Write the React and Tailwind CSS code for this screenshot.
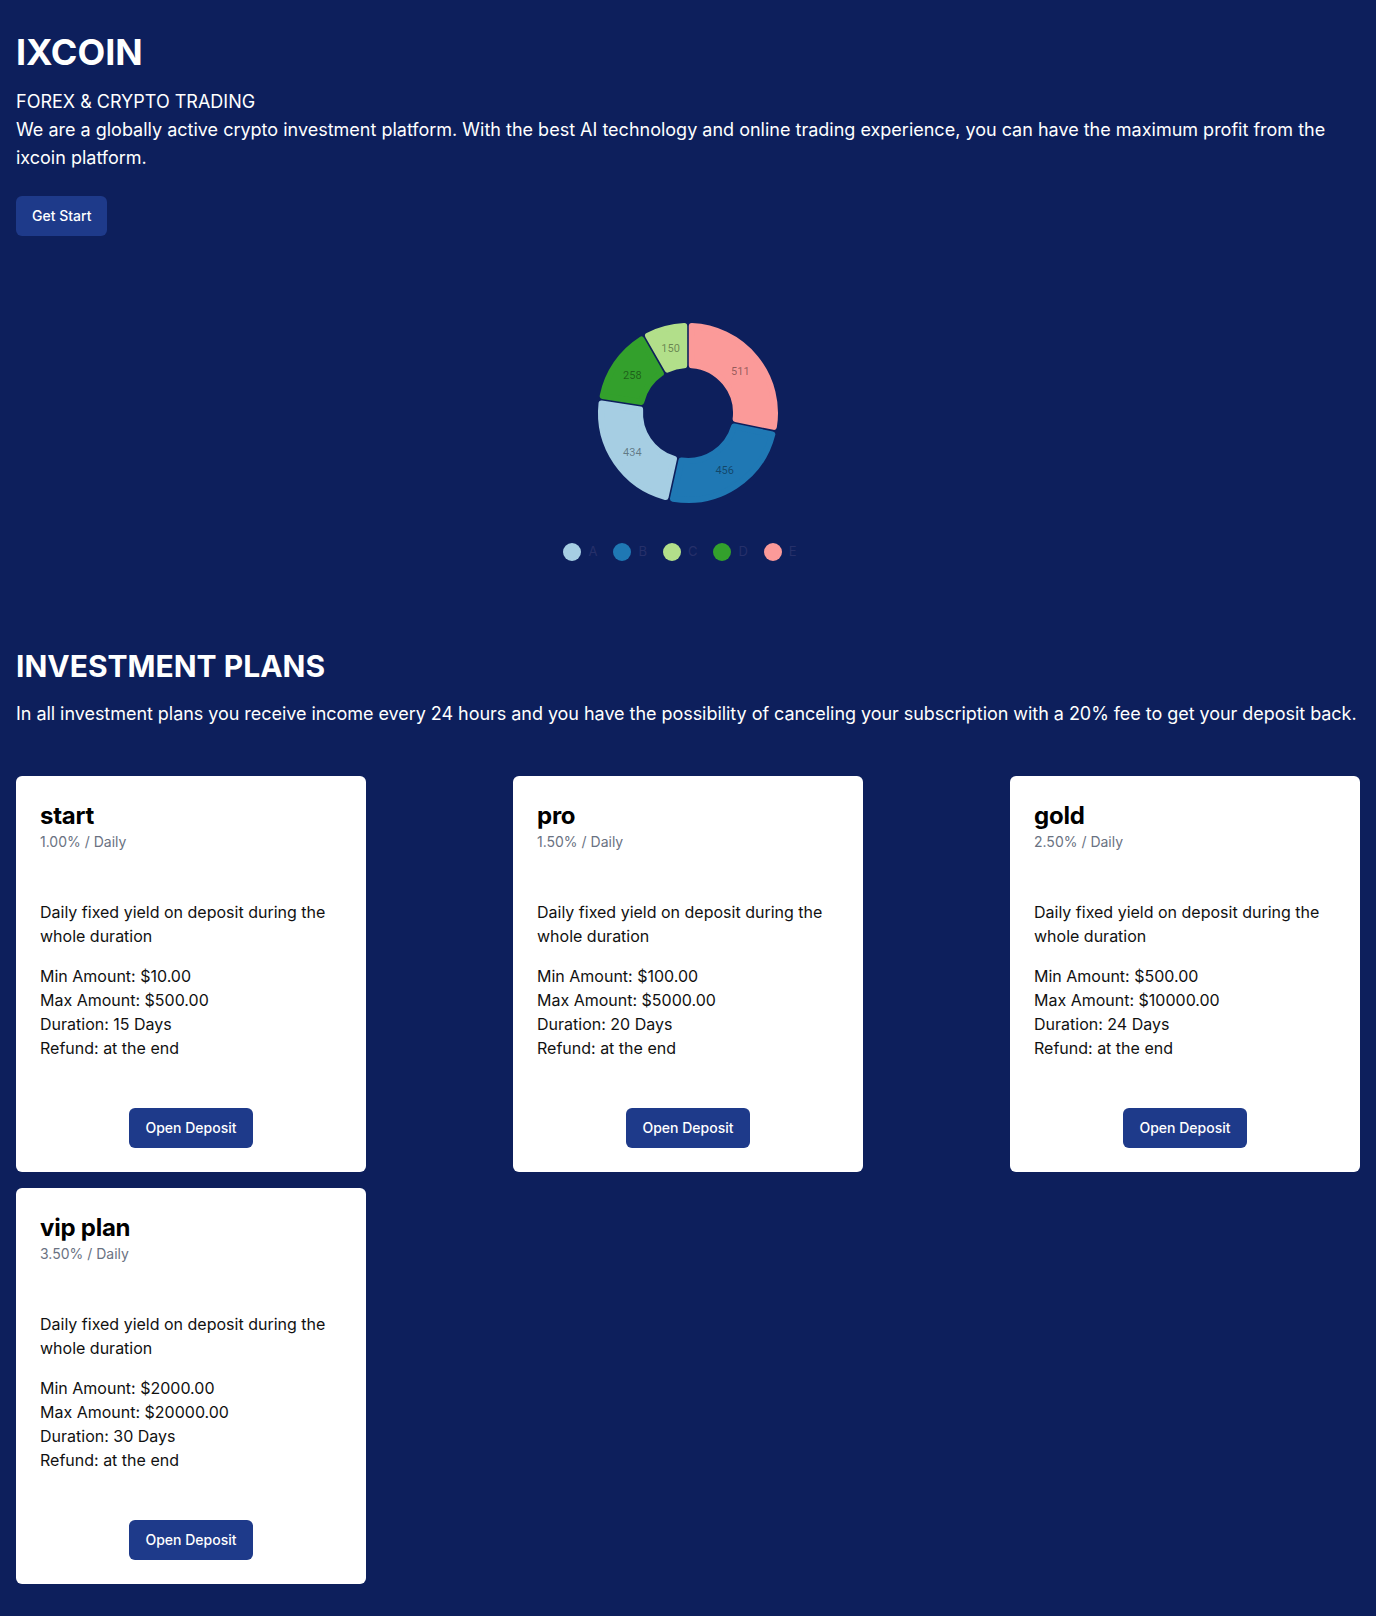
const plans = [
  { name: 'start', rate: '1.00%', min: '$10.00', max: '$500.00', days: 15 },
  { name: 'pro', rate: '1.50%', min: '$100.00', max: '$5000.00', days: 20 },
  { name: 'gold', rate: '2.50%', min: '$500.00', max: '$10000.00', days: 24 },
  { name: 'vip plan', rate: '3.50%', min: '$2000.00', max: '$20000.00', days: 30 }
]

// clockwise from 12 o'clock, biggest first
const slices = [
  { label: 'E', value: 511, color: '#fb9a99' },
  { label: 'B', value: 456, color: '#1f78b4' },
  { label: 'A', value: 434, color: '#a6cee3' },
  { label: 'D', value: 258, color: '#33a02c' },
  { label: 'C', value: 150, color: '#b2df8a' }
]

const legend = [
  { label: 'A', color: '#a6cee3' },
  { label: 'B', color: '#1f78b4' },
  { label: 'C', color: '#b2df8a' },
  { label: 'D', color: '#33a02c' },
  { label: 'E', color: '#fb9a99' }
]

const CX = 100
const CY = 100
const R_IN = 45
const R_OUT = 90
const CORNER = 3

const pt = (r, a) => [CX + r * Math.sin(a), CY - r * Math.cos(a)]

/* arc shrunk by the corner radius, then stroked round to get soft corners */
const arcPath = (a0, a1) => {
  const ro = R_OUT - CORNER
  const ri = R_IN + CORNER
  const io = (CORNER + 0.8) / ro
  const ii = (CORNER + 0.8) / ri
  const [x1, y1] = pt(ro, a0 + io)
  const [x2, y2] = pt(ro, a1 - io)
  const [x3, y3] = pt(ri, a1 - ii)
  const [x4, y4] = pt(ri, a0 + ii)
  const large = a1 - a0 > Math.PI ? 1 : 0
  return `M${x1} ${y1} A${ro} ${ro} 0 ${large} 1 ${x2} ${y2} L${x3} ${y3} A${ri} ${ri} 0 ${large} 0 ${x4} ${y4} Z`
}

const Donut = () => {
  const total = slices.reduce((s, d) => s + d.value, 0)
  let acc = 0

  return (
    <svg width="200" height="200" viewBox="0 0 200 200">
      {slices.map(s => {
        const a0 = (acc / total) * Math.PI * 2
        acc += s.value
        const a1 = (acc / total) * Math.PI * 2
        const mid = (a0 + a1) / 2
        const [lx, ly] = pt((R_IN + R_OUT) / 2, mid)
        return (
          <g key={s.label}>
            <path
              d={arcPath(a0, a1)}
              fill={s.color}
              stroke={s.color}
              strokeWidth={CORNER * 2}
              strokeLinejoin="round"
            />
            <text
              x={lx}
              y={ly + 1}
              textAnchor="middle"
              dominantBaseline="central"
              fontSize="11"
              fill="rgba(0,0,0,0.42)"
              style={{ fontFamily: 'Roboto, sans-serif' }}
            >
              {s.value}
            </text>
          </g>
        )
      })}
    </svg>
  )
}

const PlanCard = ({ plan }) => (
  <div className="w-[350px] rounded-md bg-white p-6 text-[#111]">
    <h3 className="text-2xl font-bold leading-8 text-black tracking-[-0.01em]">{plan.name}</h3>
    <p className="text-sm text-gray-500">{plan.rate} / Daily</p>

    <p className="mt-12 text-base leading-6">
      Daily fixed yield on deposit during the whole duration
    </p>

    <div className="mt-4 text-base leading-6">
      <p>Min Amount: {plan.min}</p>
      <p>Max Amount: {plan.max}</p>
      <p>Duration: {plan.days} Days</p>
      <p>Refund: at the end</p>
    </div>

    <div className="mt-12 flex justify-center">
      <button className="h-10 rounded-md bg-[#1e3a8a] px-4 text-sm font-medium text-white">
        Open Deposit
      </button>
    </div>
  </div>
)

const App = () => {
  return (
    <div className="min-h-screen bg-[#0d1f5c] px-4 py-8 text-white font-['Inter',sans-serif]">

      {/* Hero */}
      <section>
        <h1 className="text-4xl font-bold leading-10">IXCOIN</h1>
        <p className="mt-4 text-lg leading-7">FOREX &amp; CRYPTO TRADING</p>
        <p className="text-lg leading-7">
          We are a globally active crypto investment platform. With the best AI technology and online trading experience, you can have the maximum profit from the ixcoin platform.
        </p>
        <button className="mt-6 h-10 rounded-md bg-[#1e3a8a] px-4 text-sm font-medium text-white">
          Get Start
        </button>
      </section>

      {/* Chart */}
      <section className="mt-[77px] flex flex-col items-center">
        <Donut />
        <div className="mt-[29px] flex items-center gap-4 pr-4">
          {legend.map(l => (
            <div key={l.label} className="flex items-center gap-[7px]">
              <span className="h-[18px] w-[18px] rounded-full" style={{ backgroundColor: l.color }} />
              <span className="text-[13px] text-[#26306a]">{l.label}</span>
            </div>
          ))}
        </div>
      </section>

      {/* Plans */}
      <section className="mt-[86px]">
        <h2 className="text-3xl font-bold leading-9">INVESTMENT PLANS</h2>
        <p className="mt-4 whitespace-nowrap text-lg leading-7 tracking-[-0.0025em]">
          In all investment plans you receive income every 24 hours and you have the possibility of canceling your subscription with a 20% fee to get your deposit back.
        </p>

        <div className="mt-12 flex flex-wrap justify-between gap-y-4">
          {plans.map(p => (
            <PlanCard key={p.name} plan={p} />
          ))}
        </div>
      </section>
    </div>
  )
}

export default App
